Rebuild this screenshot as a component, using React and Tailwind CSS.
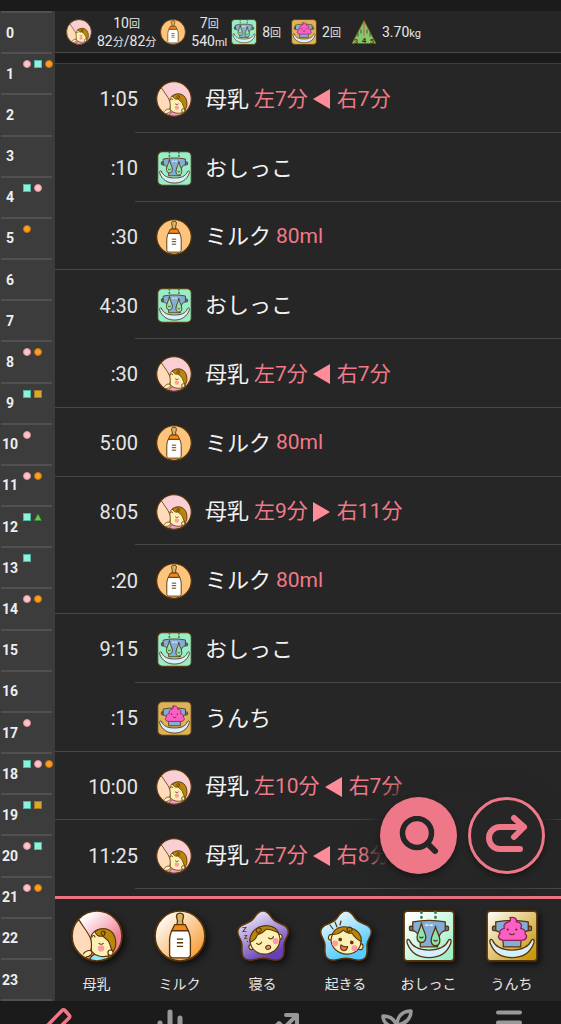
import React from 'react'
import clsx from 'clsx'

const LINE = '#5a3508'

/* ── Icons ─────────────────────────────────────── */

const BreastIcon = ({ className, glossy }) => (
  <svg viewBox="0 0 50 50" className={className} aria-hidden="true">
    <defs>
      <linearGradient id="breastBg" x1="0.1" y1="0.1" x2="0.8" y2="0.9">
        <stop offset="0.1" stopColor="#fff" />
        <stop offset="0.8" stopColor="#ef8294" />
      </linearGradient>
      <clipPath id="breastClip"><circle cx="25" cy="25" r="24" /></clipPath>
    </defs>
    <circle cx="25" cy="25" r="24" fill={glossy ? 'url(#breastBg)' : '#f9cfd4'} />
    <g clipPath="url(#breastClip)" stroke={LINE} strokeWidth="1.1" strokeLinecap="round" strokeLinejoin="round">
      <path d="M17 50c1-4 3-7 8-8l10 2c2 2 2 4 1 7z" fill={glossy ? '#8fe9f5' : '#f19bc9'} />
      <path d="M19 28c0-6 5-10 12-10 7 0 11 6 11 13 0 4-1 8-3 11l-3 2c-6 2-13 0-16-4-1-2 0-4-1-6z" fill="#fdf0b4" />
      <path d="M23 21c2-2 5-3 8-3 8 0 12 6 12 14 0 4-1 6-3 8-2-3-2-7-4-10-2-2-4-4-6-5-3 1-6-1-7-4z" fill="#b8860b" />
      <path d="M33 22a2 2 0 1 0-3 2c2 1 3 0 2-2" fill="none" />
      <circle cx="38" cy="41" r="2.5" fill="#fdf0b4" />
      <circle cx="29" cy="37" r="3" fill="#ff9aa6" stroke="none" />
      <path d="M27 32c1 1 3 1 4 0M20 26c1-2 3-2 3 0" fill="none" />
      <path d="M-2 8L8 10c4 7 9 12 11 18 2 8 0 13-4 17l-6 8h-12z" fill="#ffdabb" />
      <path d="M12 42c2-3 6-4 8-2 1 2-2 5-5 5" fill="#fdf0b4" />
    </g>
    <circle cx="25" cy="25" r="24" fill="none" stroke={LINE} strokeWidth="1.6" />
  </svg>
)

const BottleIcon = ({ className, glossy }) => (
  <svg viewBox="0 0 50 50" className={className} aria-hidden="true">
    <defs>
      <linearGradient id="bottleBg" x1="0" y1="0" x2="1" y2="1">
        <stop offset="0.1" stopColor="#fff" />
        <stop offset="0.85" stopColor="#f7a13e" />
      </linearGradient>
    </defs>
    <circle cx="25" cy="25" r="24" fill={glossy ? 'url(#bottleBg)' : '#fcc47d'} stroke={LINE} strokeWidth="1.6" />
    <g stroke={LINE} strokeWidth="1.3" strokeLinejoin="round">
      <path d="M22 14c1-2 1-4 0-6-1-3 0-5 3-5s4 2 3 5c-1 2-1 4 0 6z" fill="#d2b46c" />
      <path d="M20 14h10l3 6H17z" fill="#f5871f" />
      <path d="M17 20h16c1 3 2 5 2 8v15c0 2-1 3-3 3H18c-2 0-3-1-3-3V28c0-3 1-5 2-8z" fill="#fff" />
      <path d="M22 28h6M22 31.5h6M22 35h6" fill="none" />
    </g>
  </svg>
)

const STAR =
  'M26 1C31 1 33 5 35 8C37 11 40 12 44 14C50 16 52 20 51 24C50 28 47 31 47 35C47 39 48 45 45 48C41 52 36 50 32 49C28 48 24 48 20 49C16 50 11 52 7 48C4 45 5 39 5 35C5 31 2 28 1 24C0 20 2 16 8 14C12 12 15 11 17 8C19 5 21 1 26 1Z'

const SleepIcon = ({ className }) => (
  <svg viewBox="0 0 52 52" className={className} aria-hidden="true">
    <defs>
      <linearGradient id="sleepBg" x1="0.2" y1="0" x2="0.7" y2="1">
        <stop offset="0.1" stopColor="#e6e0f6" />
        <stop offset="0.9" stopColor="#6640b4" />
      </linearGradient>
    </defs>
    <path d={STAR} fill="url(#sleepBg)" stroke={LINE} strokeWidth="1.5" />
    <text x="5" y="22" fontSize="8" fontWeight="700" fill={LINE} fontFamily="Roboto">Z</text>
    <text x="7" y="29" fontSize="7" fontWeight="700" fill={LINE} fontFamily="Roboto">z</text>
    <g stroke={LINE} strokeWidth="1.1" strokeLinecap="round" strokeLinejoin="round" transform="rotate(-16 28 30)">
      <circle cx="13" cy="33" r="2.5" fill="#fdf0b4" />
      <circle cx="43" cy="31" r="2.5" fill="#fdf0b4" />
      <ellipse cx="28" cy="30" rx="15" ry="14" fill="#fdf0b4" />
      <path d="M13 28c1-7 7-12 15-12s14 4 15 11c-3-3-7-6-11-7-3 2-7 3-10 3-2 3-5 5-9 5z" fill="#b8860b" />
      <path d="M27 20a2.5 2.5 0 1 0-4 1c2 2 3 0 2-1" fill="none" />
      <path d="M19 31c1 2 4 2 5 0M32 29c1 2 4 2 5 0" fill="none" />
      <circle cx="38" cy="34" r="3" fill="#ff9aa6" stroke="none" />
      <ellipse cx="29" cy="38" rx="2.5" ry="2" fill="#f58b7c" />
    </g>
    <path d="M10 31l1 1" stroke={LINE} />
  </svg>
)

const WakeIcon = ({ className }) => (
  <svg viewBox="0 0 52 52" className={className} aria-hidden="true">
    <defs>
      <linearGradient id="wakeBg" x1="0.2" y1="0" x2="0.7" y2="0.9">
        <stop offset="0.1" stopColor="#e4f6ff" />
        <stop offset="0.9" stopColor="#56ccff" />
      </linearGradient>
    </defs>
    <path d={STAR} fill="url(#wakeBg)" stroke={LINE} strokeWidth="1.5" />
    <path d="M10 15l3 4M15 12l2 5M21 11l-1 4" stroke={LINE} strokeWidth="1.2" strokeLinecap="round" />
    <g stroke={LINE} strokeWidth="1.1" strokeLinecap="round" strokeLinejoin="round" transform="rotate(14 26 31)">
      <circle cx="11" cy="31" r="3" fill="#fdf0b4" />
      <circle cx="41" cy="33" r="3" fill="#fdf0b4" />
      <ellipse cx="26" cy="31" rx="15" ry="13" fill="#fdf0b4" />
      <path d="M11 28c1-7 7-11 15-11s14 4 15 11c-4-1-8-3-11-6-3 1-6 1-9-1-2 3-6 6-10 7z" fill="#b8860b" />
      <path d="M29 20a2.5 2.5 0 1 0-4 1c2 1 3 0 2-1" fill="none" />
      <circle cx="20" cy="31" r="1.3" fill={LINE} />
      <circle cx="32" cy="31" r="1.3" fill={LINE} />
      <circle cx="16" cy="36" r="3" fill="#ff9aa6" stroke="none" />
      <circle cx="36" cy="36" r="3" fill="#ff9aa6" stroke="none" />
      <path d="M22 36c2 1 5 1 7 0 0 3-1 5-3.5 5S22 39 22 36z" fill="#f56a5e" />
    </g>
  </svg>
)

const Diaper = () => (
  <>
    <rect x="6" y="15" width="5" height="4" rx="1" fill="#5b7fa3" />
    <rect x="37" y="15" width="5" height="4" rx="1" fill="#5b7fa3" />
    <path d="M9 11c10-2 20-2 30 0v8c-5 1-7 6-7 15H16c0-9-2-14-7-15z" fill="#83aed8" />
  </>
)

const PeeIcon = ({ className, glossy }) => (
  <svg viewBox="0 0 48 48" className={className} aria-hidden="true">
    <defs>
      <linearGradient id="peeBg" x1="0" y1="0" x2="1" y2="1">
        <stop offset="0.1" stopColor="#fff" />
        <stop offset="0.9" stopColor="#9defc8" />
      </linearGradient>
    </defs>
    <rect x="1" y="1" width="46" height="46" rx={glossy ? 3 : 6} fill={glossy ? 'url(#peeBg)' : '#98eec8'} stroke={LINE} strokeWidth="1.5" />
    <g stroke={LINE} strokeWidth="1.2" strokeLinejoin="round" strokeLinecap="round">
      <Diaper />
      <path d="M21 14h7" stroke="#fff" strokeDasharray="2 2" />
      <path d="M6 28c3 7 9 9 18 9s15-2 18-9c2-2 3 0 2 3-3 8-10 13-20 13S7 39 4 31c-1-3 0-5 2-3z" fill="#d5efff" />
      <path d="M17 2v7M30 2v9" strokeDasharray="0.5 4" strokeWidth="2.5" stroke="#3f7654" />
      <path d="M17 12c1 6 4 9 4 13 0 3-1 5-4 5s-4-2-4-5c0-4 3-7 4-13z" fill="#8fe3b6" />
      <path d="M30 15c1 6 4 8 4 13 0 3-1 5-4 5s-4-2-4-5c0-5 3-7 4-13z" fill="#8fe3b6" />
      <path d="M15.5 25c1 1 2 1 3 0M28.5 28c1 1 2 1 3 0" fill="none" />
    </g>
  </svg>
)

const PoopIcon = ({ className, glossy }) => (
  <svg viewBox="0 0 48 48" className={className} aria-hidden="true">
    <defs>
      <linearGradient id="poopBg" x1="0" y1="0" x2="1" y2="1">
        <stop offset="0" stopColor="#fff" />
        <stop offset="0.9" stopColor="#c9970c" />
      </linearGradient>
    </defs>
    <rect x="1" y="1" width="46" height="46" rx={glossy ? 3 : 6} fill={glossy ? 'url(#poopBg)' : '#dcb25a'} stroke={LINE} strokeWidth="1.5" />
    <g stroke={LINE} strokeWidth="1.2" strokeLinejoin="round" strokeLinecap="round">
      <Diaper />
      <path d="M6 28c3 7 9 9 18 9s15-2 18-9c2-2 3 0 2 3-3 8-10 13-20 13S7 39 4 31c-1-3 0-5 2-3z" fill="#d5efff" />
      <path d="M22 7c4-1 7 1 6 4 4 0 6 3 4 6 4 1 5 3 4 5 3 2 1 6-3 6H16c-4 0-6-4-3-6-1-2 0-4 4-5-1-3 0-5 4-6 2-1 2-2 1-4z" fill="#fb5fc6" stroke="#8a2458" />
      <path d="M20 18v.1M28 18v.1" strokeWidth="2" />
      <path d="M22 22c1 1 3 1 4 0" fill="none" />
    </g>
  </svg>
)

const WeightIcon = ({ className }) => (
  <svg viewBox="0 0 26 25" className={className} aria-hidden="true">
    <path d="M13 1l12 23H1z" fill="#86c872" stroke="#7a5a20" strokeWidth="1" strokeLinejoin="round" />
    <path d="M7 13v4M10 10v4M16 10v4M19 13v4" stroke="#3d5a28" strokeWidth="1" />
    <path d="M13 2v14" stroke="#d8503c" strokeWidth="1" />
    <g fontFamily="Roboto" fontWeight="700" fill="#3d3a00" textAnchor="middle">
      <text x="13" y="23" fontSize="8">4</text>
      <text x="5" y="24" fontSize="7">3</text>
      <text x="21" y="24" fontSize="7">5</text>
    </g>
  </svg>
)

/* ── Data ──────────────────────────────────────── */

const TYPES = {
  breast: { label: '母乳', Icon: BreastIcon, size: 'size-9' },
  milk: { label: 'ミルク', Icon: BottleIcon, size: 'size-9' },
  pee: { label: 'おしっこ', Icon: PeeIcon, size: 'size-[35px]' },
  poop: { label: 'うんち', Icon: PoopIcon, size: 'size-[35px]' },
}

const SUMMARY = [
  { Icon: BreastIcon, lines: [['10', '回'], ['82', '分', '/82', '分']] },
  { Icon: BottleIcon, lines: [['7', '回'], ['540', 'ml']] },
  { Icon: PeeIcon, lines: [['8', '回']] },
  { Icon: PoopIcon, lines: [['2', '回']] },
  { Icon: WeightIcon, lines: [['3.70', 'kg']] },
]

const RECORDS = [
  { time: '1:05', type: 'breast', left: '左7分', dir: 'left', right: '右7分' },
  { time: ':10', type: 'pee' },
  { time: ':30', type: 'milk', amount: '80ml', last: true },
  { time: '4:30', type: 'pee' },
  { time: ':30', type: 'breast', left: '左7分', dir: 'left', right: '右7分', last: true },
  { time: '5:00', type: 'milk', amount: '80ml', last: true },
  { time: '8:05', type: 'breast', left: '左9分', dir: 'right', right: '右11分' },
  { time: ':20', type: 'milk', amount: '80ml', last: true },
  { time: '9:15', type: 'pee' },
  { time: ':15', type: 'poop', last: true },
  { time: '10:00', type: 'breast', left: '左10分', dir: 'left', right: '右7分', last: true },
  { time: '11:25', type: 'breast', left: '左7分', dir: 'left', right: '右8分' },
]

// b: breast, m: milk, p: pee, u: poop, w: weight
const HOURS = [
  '', 'bpm', '', '', 'pb', 'm', '', '', 'bm', 'pu', 'b', 'bm',
  'pw', 'p', 'bm', '', '', 'b', 'pbm', 'pu', 'bp', 'bm', '', '',
]

const MARKS = {
  b: 'rounded-full bg-[#ffc4ca] border border-[#d9929b]',
  m: 'rounded-full bg-[#ff9d20] border border-[#c07414]',
  p: 'bg-[#90f0dc] border border-[#4fb8a3]',
  u: 'bg-[#d9a62e] border border-[#a07c20]',
}

const QUICK = [
  { label: '母乳', Icon: BreastIcon },
  { label: 'ミルク', Icon: BottleIcon },
  { label: '寝る', Icon: SleepIcon },
  { label: '起きる', Icon: WakeIcon },
  { label: 'おしっこ', Icon: PeeIcon },
  { label: 'うんち', Icon: PoopIcon },
]

const NAV = [
  {
    label: '記録',
    active: true,
    icon: <path d="M18 2.5L1 20v7h7L25 10c1-1 1-2 0-3l-4-4.5c-1-1-2-1-3 0z" strokeWidth="3.5" />,
  },
  { label: 'まとめ', icon: <path d="M4 15v15M14 4v26M24 10v20" strokeWidth="5" /> },
  { label: '成長曲線', icon: <path d="M2 24l9-9 5 5L29 7M18 7h11v10" strokeWidth="4" /> },
  {
    label: '成長',
    icon: <path d="M16 30V17C16 8 22 3 30 3c0 8-6 13-14 14M16 19C14 11 9 8 2 8c0 7 6 11 14 11" strokeWidth="3.5" />,
  },
  { label: 'メニュー', icon: <path d="M5 4.5h22M5 14.5h22M5 24.5h22" strokeWidth="4" /> },
]

/* ── Parts ─────────────────────────────────────── */

const Mark = ({ kind }) => {
  if (kind === 'w') {
    return (
      <svg viewBox="0 0 8 8" className="size-2 shrink-0" aria-hidden="true">
        <path d="M4 1l3.5 6.5h-7z" fill="#5ecf4a" stroke="#3b8a2c" strokeWidth="0.5" />
      </svg>
    )
  }
  return <span className={clsx('size-2 shrink-0', MARKS[kind])} />
}

const HourRail = () => (
  <ol className="flex w-[55px] shrink-0 flex-col bg-[#3c3c3c] pr-[3px] pl-px">
    {HOURS.map((marks, hour) => (
      <li key={hour} className="flex min-h-0 flex-1 items-center border-t-2 border-[#505050] last:border-b-2">
        <span className="w-[18px] shrink-0 text-center text-sm font-bold text-[#eee]">{hour}</span>
        <span className="flex gap-[3px] self-start pt-[6px] pl-1">
          {[...marks].map((kind) => <Mark key={kind} kind={kind} />)}
        </span>
      </li>
    ))}
  </ol>
)

const Summary = () => (
  <header className="flex h-[42px] shrink-0 items-center border-b border-[#484848] pl-[11px]">
    {SUMMARY.map(({ Icon, lines }, i) => (
      <div key={i} className={clsx('flex items-center gap-[5px]', i < 2 ? 'mr-1' : 'mr-[10px]')}>
        <Icon className="size-[26px]" />
        <div className="pt-0.5 text-center text-sm leading-4 text-[#e6e6e6]">
          {lines.map((parts, n) => (
            <div key={n}>
              {parts.map((part, k) => (
                <span key={k} className={k % 2 ? 'text-[11px]' : ''}>{part}</span>
              ))}
            </div>
          ))}
        </div>
      </div>
    ))}
  </header>
)

const Arrow = ({ dir }) => (
  <svg viewBox="0 0 17 20" className="mr-[7px] ml-[5px] h-5 w-[17px]" aria-hidden="true">
    <path d={dir === 'left' ? 'M0 10L17 0v20z' : 'M17 10L0 0v20z'} fill="#ff8c98" />
  </svg>
)

const Record = ({ time, type, left, dir, right, amount, last }) => {
  const { label, Icon, size } = TYPES[type]
  return (
    <li className="flex min-h-0 flex-1 flex-col">
      <div className="flex flex-1 items-center pt-[3px]">
        <time className="w-[83px] text-right text-xl text-[#e6e6e6]">{time}</time>
        <span className="ml-[18px] flex w-9 justify-center"><Icon className={size} /></span>
        <span className="ml-[13px] text-[22px] text-[#f2f2f2]">{label}</span>
        {left && (
          <span className="ml-[5px] flex items-center text-[21px] text-[#f07a88]">
            {left}<Arrow dir={dir} />{right}
          </span>
        )}
        {amount && <span className="ml-[5px] text-[21px] text-[#f07a88]">{amount}</span>}
      </div>
      <div className={clsx('h-px shrink-0 bg-[#474747]', !last && 'ml-20')} />
    </li>
  )
}

const FloatingButtons = () => (
  <div className="absolute right-4 bottom-[22px] flex gap-[11px] rounded-full bg-[#262626] shadow-[0_0_14px_12px_#262626]">
    <button
      aria-label="検索"
      className="flex size-[77px] items-center justify-center rounded-full bg-[#ee7888] shadow-[0_3px_6px_rgba(0,0,0,0.4)]"
    >
      <svg viewBox="0 0 40 40" className="size-10" fill="none" stroke="#262626" strokeLinecap="round" aria-hidden="true">
        <circle cx="18" cy="17" r="14.5" strokeWidth="5.5" />
        <path d="M29 28l7 7" strokeWidth="6" />
      </svg>
    </button>
    <button
      aria-label="次へ"
      className="flex size-[77px] items-center justify-center rounded-full border-[3px] border-[#ee7888] bg-[#262626] shadow-[0_3px_6px_rgba(0,0,0,0.4)]"
    >
      <svg viewBox="0 0 42 44" className="h-11 w-[42px]" fill="none" stroke="#ee7888" strokeWidth="6" strokeLinecap="round" strokeLinejoin="round" aria-hidden="true">
        <path d="M38 13H14a11 11 0 0 0 0 22h20M28 4l10 9-10 10" />
      </svg>
    </button>
  </div>
)

const App = () => {
  return (
    <div className="flex h-screen flex-col overflow-hidden bg-[#1b1b1b] pt-[11px] font-[Roboto,'Noto_Sans_CJK_JP',sans-serif]">
      <div className="flex min-h-0 flex-1">
        <HourRail />

        <div className="flex min-w-0 flex-1 flex-col bg-[#262626]">
          <Summary />
          <div className="h-[10px] shrink-0 bg-[#1a1a1a]" />

          <main className="relative flex min-h-0 flex-1 flex-col border-t border-[#3c3c3c]">
            <ul className="flex min-h-0 flex-1 flex-col pb-[7px]">
              {RECORDS.map((record, i) => <Record key={i} {...record} />)}
            </ul>
            <FloatingButtons />
          </main>

          <div className="grid h-[105px] shrink-0 grid-cols-6 border-t-[3px] border-[#ea7482] pt-[11px] pr-2">
            {QUICK.map(({ label, Icon }) => (
              <button key={label} className="flex flex-col items-center gap-3 text-sm text-[#e6e6e6]">
                <Icon glossy className="size-[52px] drop-shadow-[3px_3px_3px_rgba(0,0,0,0.6)]" />
                {label}
              </button>
            ))}
          </div>
        </div>
      </div>

      <nav className="-mr-1 grid h-[23px] shrink-0 grid-cols-5 overflow-hidden pt-[7px] pl-1">
        {NAV.map(({ label, active, icon }) => (
          <button
            key={label}
            aria-label={label}
            className={clsx('flex justify-center', active ? 'text-[#ee7888]' : 'text-[#999]')}
          >
            <svg viewBox="0 0 32 32" className="size-8 shrink-0" fill="none" stroke="currentColor" strokeLinecap="round" strokeLinejoin="round" aria-hidden="true">
              {icon}
            </svg>
          </button>
        ))}
      </nav>
    </div>
  )
}

export default App
